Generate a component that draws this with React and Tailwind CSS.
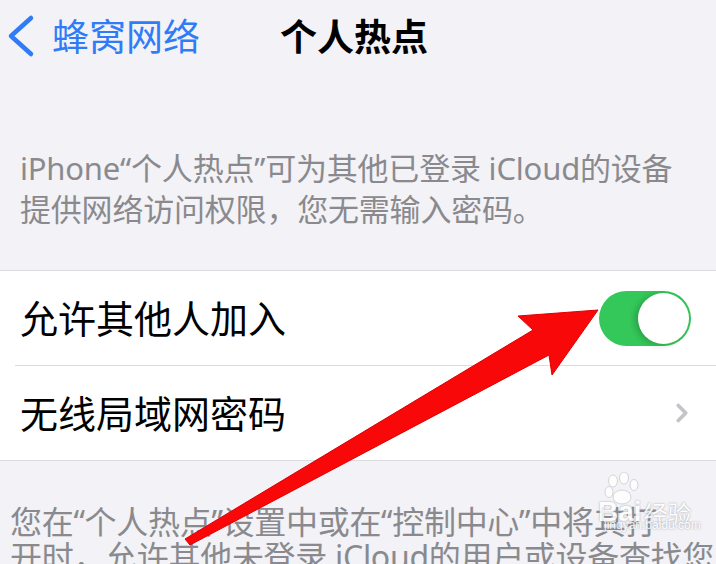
import { ChevronRight } from 'lucide-react'

function Toggle() {
  return (
    <div className="w-[92px] h-[55px] rounded-full bg-[#34c759] flex items-center justify-end pr-[2px]">
      <div className="w-[51px] h-[51px] rounded-full bg-white shadow-[-3px_1px_6px_rgba(0,0,0,0.2)]" />
    </div>
  )
}

function Row({ label, children }) {
  return (
    <div className="h-[94px] flex items-center justify-between pl-[20px] pr-[25px]">
      <span className="text-[38px] leading-none text-black">{label}</span>
      {children}
    </div>
  )
}

function Arrow() {
  return (
    <svg className="absolute left-0 top-0 pointer-events-none" width="716" height="564" viewBox="0 0 716 564">
      <polygon
        points="185,539 533,330 518,316 598,310 552,375 549,355 190,545"
        fill="#f80808"
        stroke="#e00000"
        strokeWidth="1"
        strokeLinejoin="round"
      />
    </svg>
  )
}

function Watermark() {
  return (
    <div className="absolute left-[598px] top-[472px] w-[118px] h-[62px] pointer-events-none opacity-85">
      <svg className="absolute left-[6px] top-0" width="36" height="34" viewBox="0 0 36 34">
        <g fill="#ffffff" stroke="#cfcfd4" strokeWidth="1">
          <ellipse cx="9" cy="9" rx="4.5" ry="6" />
          <ellipse cx="20" cy="6" rx="4.5" ry="6" />
          <ellipse cx="30" cy="13" rx="4" ry="5.5" />
          <ellipse cx="5" cy="20" rx="4" ry="5.5" />
          <ellipse cx="18" cy="25" rx="9" ry="7" />
        </g>
      </svg>
      <div className="absolute left-0 top-[26px] flex items-end gap-[2px] text-white [text-shadow:0_0_2px_#8e8e94]">
        <span className="text-[28px] leading-none font-bold font-['Liberation_Sans',sans-serif]">Bai</span>
        <span className="text-[24px] leading-none">经验</span>
      </div>
      <div className="absolute left-[6px] top-[47px] text-[12px] leading-none text-white [text-shadow:0_0_2px_#8e8e94] font-['Liberation_Sans',sans-serif]">
        jingyan.baidu.com
      </div>
    </div>
  )
}

export default function App() {
  return (
    <div className="relative w-[716px] h-[564px] overflow-hidden bg-[#f2f2f7] font-['Noto_Sans','Noto_Sans_CJK_SC',sans-serif]">
      <header className="h-[72px] flex items-center">
        <div className="flex items-center text-[#2f7cf6]">
          <svg className="ml-[6px]" width="30" height="44" viewBox="0 0 30 44" fill="none">
            <polyline points="25,4 5,22 25,40" stroke="currentColor" strokeWidth="4.5" strokeLinecap="round" strokeLinejoin="round" />
          </svg>
          <span className="ml-[16px] text-[37px] leading-none">蜂窝网络</span>
        </div>
        <h1 className="ml-[80px] text-[37px] leading-none font-bold text-black">个人热点</h1>
      </header>

      <p className="mt-[76px] px-[20px] text-[31px] leading-[41px] text-[#8a8a8e] whitespace-nowrap tracking-[-0.2px]">
        iPhone“个人热点”可为其他已登录 iCloud的设备
        <br />
        提供网络访问权限，您无需输入密码。
      </p>

      <section className="mt-[40px] bg-white border-y border-[#dcdce0]">
        <Row label="允许其他人加入">
          <Toggle />
        </Row>
        <div className="ml-[15px] border-t border-[#dcdce0]" />
        <Row label="无线局域网密码">
          <ChevronRight className="w-[30px] h-[30px] text-[#c4c4c8] -mr-[6px]" strokeWidth={3} />
        </Row>
      </section>

      <p className="mt-[43px] pl-[10px] text-[32px] leading-[35px] text-[#8a8a8e] whitespace-nowrap tracking-[-0.3px]">
        您在“个人热点”设置中或在“控制中心”中将其打
        <br />
        开时，允许其他未登录 iCloud的用户或设备查找您
      </p>

      <Watermark />
      <Arrow />
    </div>
  )
}
